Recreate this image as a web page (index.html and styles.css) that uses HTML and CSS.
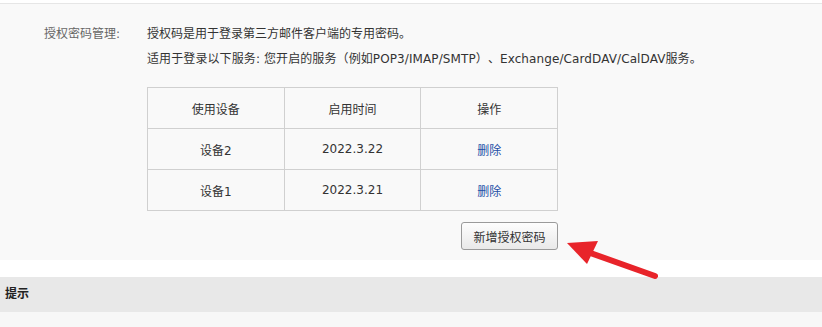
FILE: index.html
```html
<!DOCTYPE html>
<html lang="zh-CN">
<head>
  <meta charset="UTF-8" />
  <meta name="viewport" content="width=device-width, initial-scale=1.0"/>
  <title>授权密码管理</title>
  <link rel="stylesheet" href="styles.css">
</head>
<body>
  <div class="panel">
    <div class="row">
      <div class="label">授权密码管理:</div>
      <div class="content">
        <p class="desc">授权码是用于登录第三方邮件客户端的专用密码。</p>
        <p class="desc desc-wide">适用于登录以下服务: 您开启的服务<span class="cjk">（</span>例如POP3/IMAP/SMTP<span class="cjk">）、</span>Exchange/CardDAV/CalDAV服务。</p>

        <table class="auth-table">
          <thead>
            <tr>
              <th>使用设备</th>
              <th>启用时间</th>
              <th>操作</th>
            </tr>
          </thead>
          <tbody>
            <tr>
              <td>设备2</td>
              <td>2022.3.22</td>
              <td><a href="#" class="del">删除</a></td>
            </tr>
            <tr>
              <td>设备1</td>
              <td>2022.3.21</td>
              <td><a href="#" class="del">删除</a></td>
            </tr>
          </tbody>
        </table>

        <div class="actions">
          <button class="btn-add">新增授权密码</button>
        </div>
      </div>
    </div>
  </div>

  <div class="tip-bar">提示</div>
  <div class="tip-body"></div>

  <!-- 标注箭头 -->
  <svg class="arrow" width="822" height="327" viewBox="0 0 822 327">
    <line x1="655" y1="276" x2="582" y2="250" stroke="#e8242a" stroke-width="6" stroke-linecap="round"/>
    <polygon points="567,243 598,241 587,264" fill="#e8242a"/>
  </svg>
</body>
</html>
```

FILE: styles.css
```css
body {
  font-family: "DejaVu Sans", "Noto Sans CJK SC", sans-serif;
  font-size: 12px;
  color: #333;
  background: #fff;
  margin: 0;
  padding-top: 3px;
  position: relative;
  overflow: hidden;
}
.panel {
  background-color: #f9f9f9;
  border-top: 1px solid #e6e6e6;
  padding: 18px 0 10px;
}
.row {
  display: flex;
}
.label {
  width: 120px;
  text-align: right;
  color: #666;
  line-height: 25px;
  margin-right: 27px;
}
.content {
  width: 411px;
}
.desc {
  margin: 0;
  height: 25px;
  line-height: 25px;
  white-space: nowrap;
  text-spacing-trim: space-all;
}
.desc-wide {
  letter-spacing: 0.1px;
}
.cjk {
  font-family: "Noto Sans CJK SC", sans-serif;
  line-height: 1;
}
.auth-table {
  width: 411px;
  border-collapse: collapse;
  margin-top: 15px;
  table-layout: fixed;
}
.auth-table th,
.auth-table td {
  border: 1px solid #d0d0d0;
  height: 40px;
  padding: 0;
  text-align: center;
  font-weight: normal;
}
.del {
  color: #1d4fa6;
  text-decoration: none;
}
.actions {
  display: flex;
  justify-content: flex-end;
  margin-top: 11px;
}
.btn-add {
  font-family: inherit;
  font-size: 12px;
  color: #333;
  width: 97px;
  height: 28px;
  border: 1px solid #9a9a9a;
  border-radius: 3px;
  background: linear-gradient(#fdfdfd, #e9e9e9);
  cursor: pointer;
}
.tip-bar {
  margin-top: 17px;
  background-color: #e8e8e8;
  height: 35px;
  line-height: 35px;
  padding-left: 5px;
  font-weight: bold;
  color: #222;
}
.tip-body {
  background-color: #f7f7f7;
  height: 15px;
}
.arrow {
  position: absolute;
  left: 0;
  top: 0;
  pointer-events: none;
}
```
